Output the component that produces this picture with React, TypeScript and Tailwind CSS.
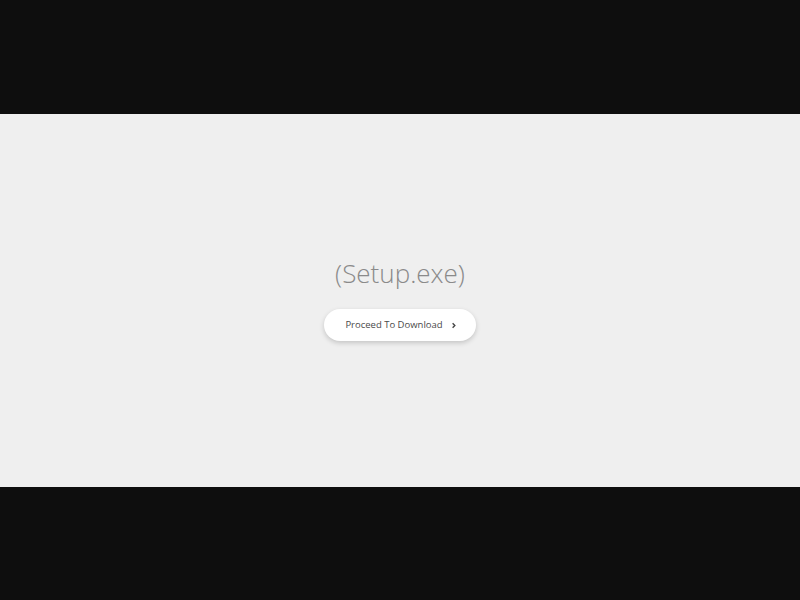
export default function App() {
  return (
    <div className="flex h-[600px] w-[800px] flex-col bg-[#0e0e0e] font-['Open_Sans',sans-serif]">
      <div className="h-[114px]" />
      <main className="flex h-[373px] flex-col items-center justify-center bg-[#efefef] pb-[6px]">
        <h1 className="text-[26px] font-light leading-[36px] text-[#8a8a8a]">(Setup.exe)</h1>
        <button className="mt-[18px] flex h-[32px] w-[152px] items-center justify-center gap-[7px] rounded-full bg-white pl-[2px] pt-[2px] text-[9.5px] text-[#4a4a4a] shadow-[0_2px_5px_rgba(0,0,0,0.18)]">
          <span>Proceed To Download</span>
          <svg className="h-[7px] w-[7px]" viewBox="0 0 8 8" fill="none" stroke="#444" strokeWidth={1.6}>
            <path d="M3 1.5 5.5 4 3 6.5" />
          </svg>
        </button>
      </main>
      <div className="flex-1" />
    </div>
  );
}
